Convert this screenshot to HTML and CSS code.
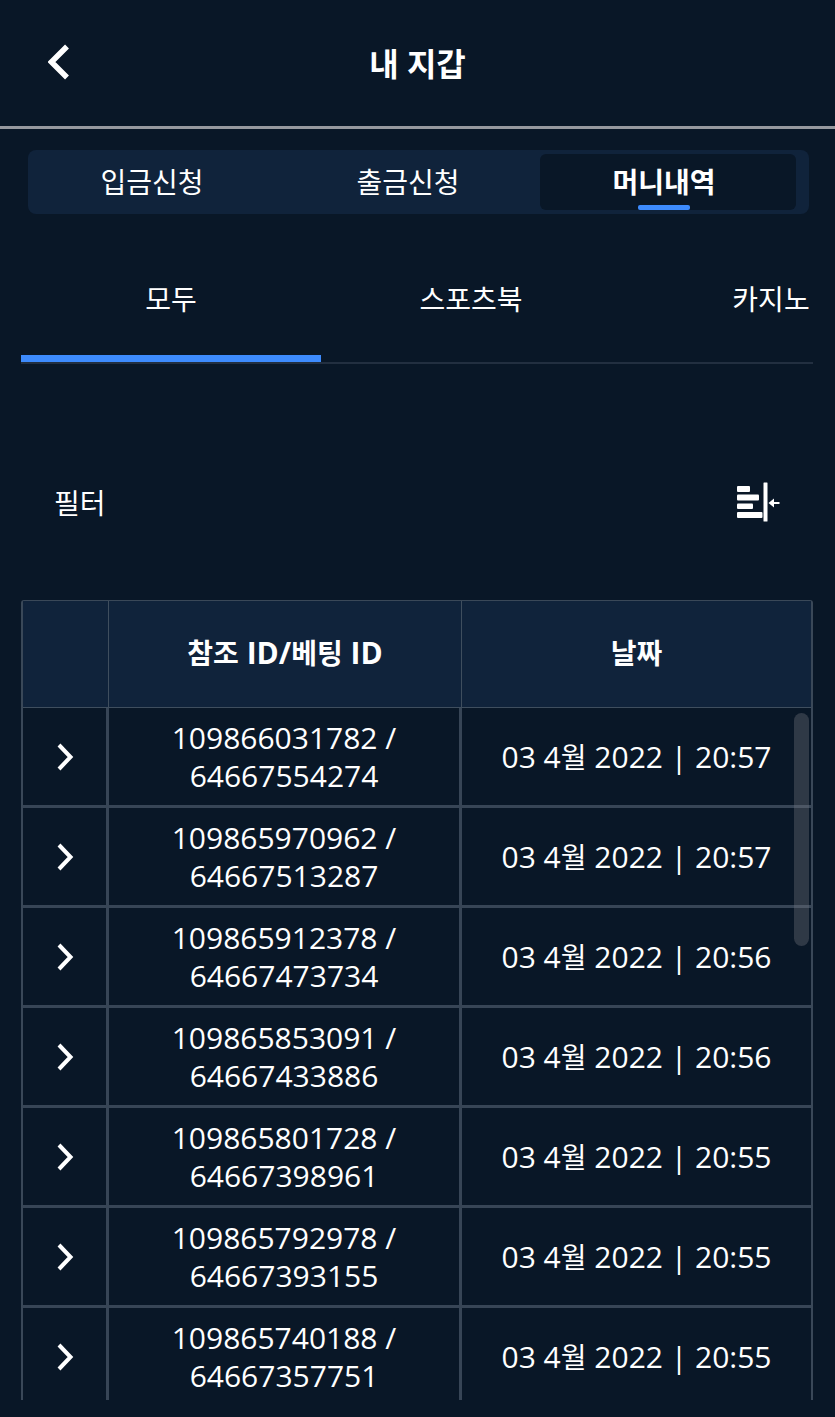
FILE: index.html
```html
<!DOCTYPE html>
<html lang="ko">
<head>
    <meta charset="UTF-8">
    <meta name="viewport" content="width=device-width, initial-scale=1.0">
    <title>내 지갑</title>
    <link rel="stylesheet" href="styles.css">
</head>
<body>
    <header class="header">
        <button type="button" class="back" aria-label="뒤로">
            <svg width="22" height="36" viewBox="0 0 22 36"><path d="M19 2.500L3.500 18L19 33.500" fill="none" stroke="#fff" stroke-width="5.500"/></svg>
        </button>
        <h1>내 지갑</h1>
    </header>

    <main class="wallet">
        <nav class="segment">
            <button type="button">입금신청</button>
            <button type="button">출금신청</button>
            <button type="button" class="active"><span>머니내역</span></button>
        </nav>

        <nav class="tabs">
            <button type="button" class="active">모두</button>
            <button type="button">스포츠북</button>
            <button type="button">카지노</button>
        </nav>

        <div class="filter">
            <span>필터</span>
            <button type="button" aria-label="필터 열기">
                <svg width="44" height="40" viewBox="0 0 44 40" fill="#fff">
                    <rect x="1" y="4" width="13" height="6" rx="1"/>
                    <rect x="1" y="12.500" width="22" height="6" rx="1"/>
                    <rect x="1" y="21.500" width="16" height="5.500" rx="1"/>
                    <rect x="1" y="30" width="25.500" height="6" rx="1"/>
                    <rect x="27.500" y="0.500" width="4" height="39" rx="0.500"/>
                    <path d="M32.500 21L38 16.500V20H43.500V22H38V25.500Z"/>
                </svg>
            </button>
        </div>

        <div class="history">
            <table>
                <thead>
                    <tr>
                        <th class="col-toggle"></th>
                        <th class="col-id"><span class="ko">참조</span> ID/<span class="ko">베팅</span> ID</th>
                        <th><span class="ko">날짜</span></th>
                    </tr>
                </thead>
                <tbody>
                    <tr>
                        <td><button type="button" class="toggle" aria-label="펼치기"><svg width="18" height="28" viewBox="0 0 18 28"><path d="M3 2L14.500 14L3 26"/></svg></button></td>
                        <td>109866031782 /<br>64667554274</td>
                        <td>03 4<span class="ko">월</span> 2022 | 20:57</td>
                    </tr>
                    <tr>
                        <td><button type="button" class="toggle" aria-label="펼치기"><svg width="18" height="28" viewBox="0 0 18 28"><path d="M3 2L14.500 14L3 26"/></svg></button></td>
                        <td>109865970962 /<br>64667513287</td>
                        <td>03 4<span class="ko">월</span> 2022 | 20:57</td>
                    </tr>
                    <tr>
                        <td><button type="button" class="toggle" aria-label="펼치기"><svg width="18" height="28" viewBox="0 0 18 28"><path d="M3 2L14.500 14L3 26"/></svg></button></td>
                        <td>109865912378 /<br>64667473734</td>
                        <td>03 4<span class="ko">월</span> 2022 | 20:56</td>
                    </tr>
                    <tr>
                        <td><button type="button" class="toggle" aria-label="펼치기"><svg width="18" height="28" viewBox="0 0 18 28"><path d="M3 2L14.500 14L3 26"/></svg></button></td>
                        <td>109865853091 /<br>64667433886</td>
                        <td>03 4<span class="ko">월</span> 2022 | 20:56</td>
                    </tr>
                    <tr>
                        <td><button type="button" class="toggle" aria-label="펼치기"><svg width="18" height="28" viewBox="0 0 18 28"><path d="M3 2L14.500 14L3 26"/></svg></button></td>
                        <td>109865801728 /<br>64667398961</td>
                        <td>03 4<span class="ko">월</span> 2022 | 20:55</td>
                    </tr>
                    <tr>
                        <td><button type="button" class="toggle" aria-label="펼치기"><svg width="18" height="28" viewBox="0 0 18 28"><path d="M3 2L14.500 14L3 26"/></svg></button></td>
                        <td>109865792978 /<br>64667393155</td>
                        <td>03 4<span class="ko">월</span> 2022 | 20:55</td>
                    </tr>
                    <tr>
                        <td><button type="button" class="toggle" aria-label="펼치기"><svg width="18" height="28" viewBox="0 0 18 28"><path d="M3 2L14.500 14L3 26"/></svg></button></td>
                        <td>109865740188 /<br>64667357751</td>
                        <td>03 4<span class="ko">월</span> 2022 | 20:55</td>
                    </tr>
                </tbody>
            </table>
            <div class="scroll-thumb"></div>
        </div>
    </main>
</body>
</html>
```
FILE: styles.css
```css
* {
    box-sizing: border-box;
}
body {
    margin: 0;
    height: 100vh;
    display: flex;
    flex-direction: column;
    background-color: #091727;
    color: #ffffff;
    font-family: "Open Sans", "Noto Sans CJK KR", sans-serif;
    font-size: 28px;
}
button {
    margin: 0;
    padding: 0;
    border: none;
    background: none;
    color: inherit;
    font: inherit;
    cursor: pointer;
}
svg {
    display: block;
}

/* Header */
.header {
    display: grid;
    grid-template-columns: 70px 1fr 70px;
    align-items: center;
    height: 129px;
    flex-shrink: 0;
    border-bottom: 3px solid #96999f;
}
.header h1 {
    margin: 0;
    padding-top: 2px;
    text-align: center;
    font-size: 32px;
    line-height: 40px;
}
.back {
    justify-self: end;
    padding-bottom: 2px;
}

.wallet {
    flex: 1;
    min-height: 0;
    display: flex;
    flex-direction: column;
    padding: 21px 22px 17px 21px;
}

/* Main menu */
.segment {
    display: grid;
    grid-template-columns: repeat(3, 1fr);
    flex-shrink: 0;
    height: 64px;
    margin: 0 4px 0 7px;
    padding: 4px 13px 4px 0;
    border-radius: 8px;
    background-color: #10233b;
}
.segment button {
    padding: 0 8px 2px 0;
    border-radius: 6px;
}
.segment .active {
    padding-bottom: 0;
    background-color: #091727;
    font-weight: bold;
}
.segment .active span {
    position: relative;
    display: block;
    line-height: 56px;
}
.segment .active span::after {
    content: "";
    position: absolute;
    bottom: 0;
    left: calc(50% - 26px);
    width: 52px;
    height: 5px;
    border-radius: 2px;
    background-color: #3d8bfd;
}

/* Category tabs */
.tabs {
    display: flex;
    flex-shrink: 0;
    height: 128px;
    margin-top: 22px;
    overflow: hidden;
    border-bottom: 2px solid #222f40;
}
.tabs button {
    flex: 0 0 300px;
    padding-bottom: 2px;
    border-top: 7px solid transparent;
    border-bottom: 7px solid transparent;
}
.tabs .active {
    border-bottom-color: #3d8bfd;
}

.filter {
    display: flex;
    justify-content: space-between;
    align-items: center;
    flex-shrink: 0;
    height: 40px;
    margin: 118px 33px 78px;
}

/* History table */
.history {
    position: relative;
    flex: 1;
    min-height: 0;
    overflow: hidden;
    border: 2px solid #3a4858;
    border-top-width: 1px;
    border-bottom: none;
    border-radius: 3px 3px 0 0;
}
table {
    width: 100%;
    table-layout: fixed;
    border-collapse: separate;
    border-spacing: 0;
    font-size: 30px;
    line-height: 38px;
}
th {
    height: 107px;
    padding: 0 0 3px;
    border-right: 1px solid #3f4e5e;
    border-bottom: 1px solid #3f4e5e;
    background-color: #10233b;
}
td {
    height: 100px;
    padding: 0;
    border-right: 3px solid #374556;
    border-bottom: 3px solid #374556;
    text-align: center;
}
th:last-child,
td:last-child {
    border-right: none;
}
.col-toggle {
    width: 86px;
}
.col-id {
    width: 353px;
}
/* Hangul runs a little smaller than the digits */
.ko {
    font-size: 28px;
}
.toggle {
    display: block;
    margin: 0 auto;
}
.toggle svg {
    fill: none;
    stroke: #ffffff;
    stroke-width: 4;
}
.scroll-thumb {
    position: absolute;
    top: 112px;
    right: 2px;
    width: 15px;
    height: 233px;
    border-radius: 8px;
    background-color: rgba(120, 120, 130, 0.35);
}
```
